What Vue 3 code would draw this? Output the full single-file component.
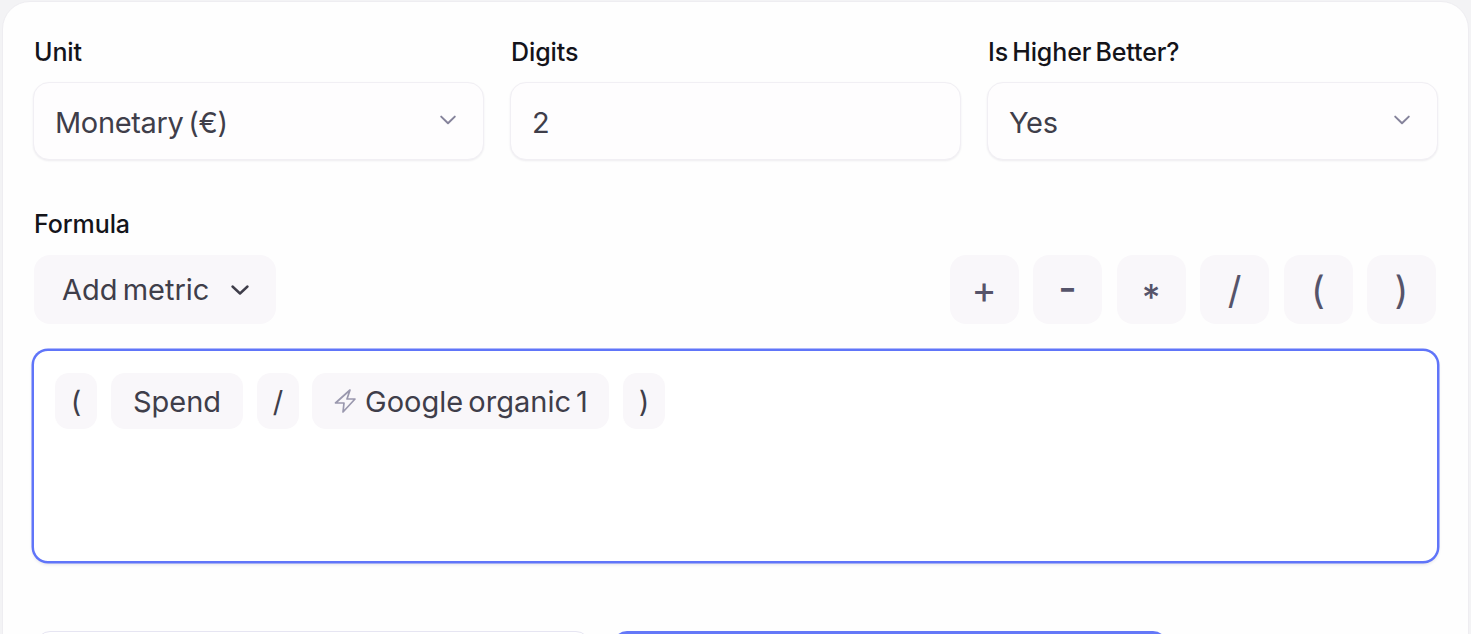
<script setup>
const fields = [
  { label: 'Unit', value: 'Monetary (€)', select: true },
  { label: 'Digits', value: '2', select: false },
  { label: 'Is Higher Better?', value: 'Yes', select: true },
]
const ops = [
  { text: '+', kind: 'plus' },
  { text: '-', kind: 'minus' },
  { text: '*', kind: 'star' },
  { text: '/', kind: 'tall' },
  { text: '(', kind: 'tall' },
  { text: ')', kind: 'tall' },
]
</script>

<template>
  <div class="page">
    <div class="card">
      <div class="fields">
        <div v-for="f in fields" :key="f.label" class="field">
          <div class="label">{{ f.label }}</div>
          <div class="input">
            <span class="value">{{ f.value }}</span>
            <svg v-if="f.select" class="chev" width="20" height="20" viewBox="0 0 20 20" fill="none">
              <path d="M3.2 6.6 10 13.2l6.8-6.6" stroke="#85839b" stroke-width="2" stroke-linecap="round" stroke-linejoin="round" />
            </svg>
          </div>
        </div>
      </div>

      <div class="label formula-label">Formula</div>
      <div class="toolbar">
        <div class="add">
          <span>Add metric</span>
          <svg width="20" height="20" viewBox="0 0 20 20" fill="none">
            <path d="M2.5 6.5 10 13.5l7.5-7" stroke="#3f3e4a" stroke-width="2.4" stroke-linecap="round" stroke-linejoin="round" />
          </svg>
        </div>
        <div class="ops">
          <div v-for="o in ops" :key="o.text" class="op" :class="o.kind">{{ o.text }}</div>
        </div>
      </div>

      <div class="editor">
        <div class="chip narrow">(</div>
        <div class="chip spend">Spend</div>
        <div class="chip narrow">/</div>
        <div class="chip metric">
          <svg width="24" height="24" viewBox="0 0 24 24" fill="none">
            <path d="M17 1 2.5 14H11l-1 9 12-13h-8z" stroke="#9a98ae" stroke-width="1.7" stroke-linecap="round" stroke-linejoin="round" />
          </svg>
          <span>Google organic 1</span>
        </div>
        <div class="chip narrow">)</div>
      </div>

      <div class="footer">
        <div class="btn cancel"></div>
        <div class="btn save"></div>
      </div>
    </div>
  </div>
</template>

<style>
html, body { margin: 0; overflow: hidden; background: #f3f3f5; }
</style>

<style scoped>
.page {
  width: 1471px;
  height: 634px;
  overflow: hidden;
  box-sizing: border-box;
  padding: 1px 2px 0 2px;
  font-family: Inter, "Noto Sans", sans-serif;
}
.card {
  height: 680px;
  box-sizing: border-box;
  background: #fefefe;
  border: 1px solid #eeedf1;
  border-radius: 28px;
  padding: 34px 29px 0 30px;
}
.fields {
  display: grid;
  grid-template-columns: repeat(3, 451px);
  column-gap: 26px;
}
.label {
  font-size: 25px;
  line-height: 32px;
  font-weight: 500;
  color: #14141a;
  letter-spacing: -0.1px;
  word-spacing: -2.5px;
  padding-left: 1px;
}
.input {
  margin-top: 14px;
  height: 78px;
  box-sizing: border-box;
  display: flex;
  align-items: center;
  justify-content: space-between;
  padding: 2px 25px 0 21px;
  background: #fefdfe;
  border: 1px solid #f1eff4;
  border-radius: 16px;
  box-shadow: 0 1px 2px rgba(40, 30, 70, 0.08);
  font-size: 29px;
  color: #3f3e4a;
  letter-spacing: -0.35px;
  word-spacing: -3px;
}
.chev { margin-top: -5px; }
.formula-label { margin-top: 48px; }
.toolbar {
  margin-top: 15px;
  display: flex;
  justify-content: space-between;
  align-items: center;
  padding: 0 2px 0 1px;
  width: 1405px;
  box-sizing: border-box;
}
.add {
  width: 242px;
  height: 69px;
  box-sizing: border-box;
  display: flex;
  align-items: center;
  gap: 21px;
  padding-left: 28px;
  background: #f9f7fa;
  border-radius: 16px;
  font-size: 29px;
  color: #3f3e4a;
  word-spacing: -3px;
}
.ops { display: flex; gap: 14.5px; }
.op {
  width: 69px;
  height: 69px;
  box-sizing: border-box;
  display: flex;
  align-items: center;
  justify-content: center;
  background: #f9f7fa;
  border-radius: 16px;
  color: #56546a;
  font-weight: 400;
}
.tall { font-size: 38px; }
.plus { font-size: 38px; padding-bottom: 2px; }
.minus { font-size: 40px; padding-bottom: 4px; font-weight: 500; }
.star { font-size: 36px; padding-top: 14px; font-weight: 500; }
.editor {
  margin: 25px 0 0 -1px;
  width: 1407px;
  height: 214px;
  box-sizing: border-box;
  display: flex;
  align-items: flex-start;
  gap: 14px;
  padding: 22px 21px;
  background: #fff;
  border: 2px solid #6075f9;
  border-radius: 16px;
  box-shadow: 0 0 0 0.5px #6075f9, 0 2px 3px rgba(40, 30, 70, 0.1);
}
.chip {
  height: 56px;
  box-sizing: border-box;
  display: flex;
  align-items: center;
  justify-content: center;
  background: #f9f7fa;
  border-radius: 14px;
  font-size: 29px;
  color: #3f3e4a;
  word-spacing: -3px;
}
.narrow { width: 42px; }
.spend { width: 132px; }
.metric { width: 297px; margin-left: -1px; gap: 8px; }
.footer {
  margin-top: 68px;
  display: flex;
  gap: 23px;
  padding-left: 3px;
}
.btn { width: 554px; height: 60px; box-sizing: border-box; border-radius: 14px; }
.cancel { background: #fff; border: 1px solid #e6e5f2; }
.save { background: #6478f8; }
</style>
